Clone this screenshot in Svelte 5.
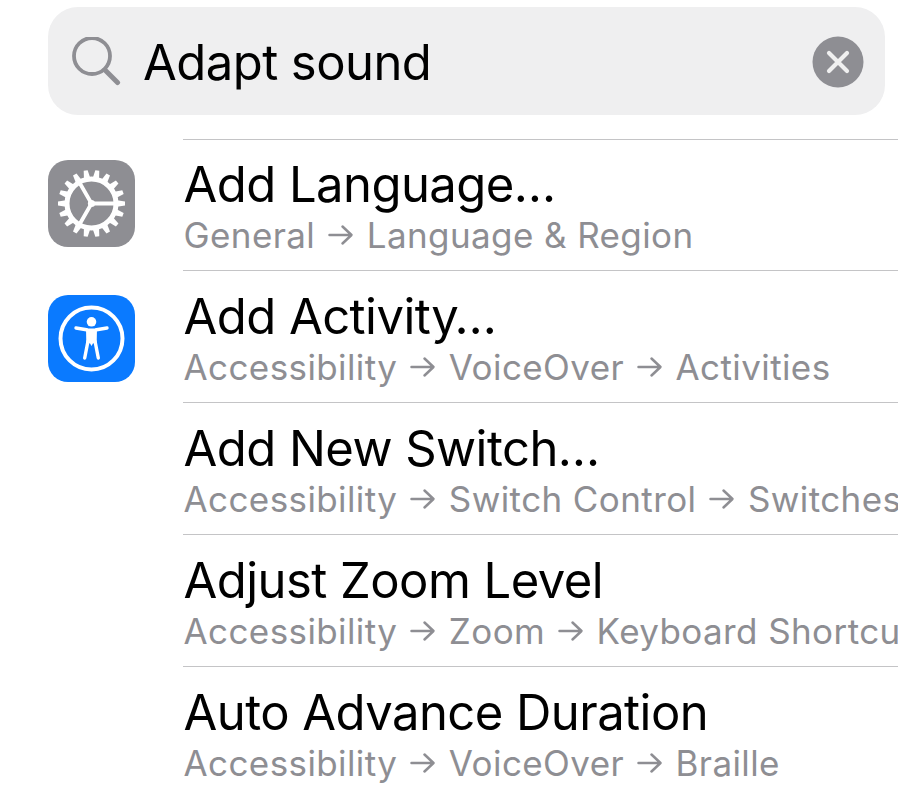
<script>
  // Settings search results list
  const results = [
    { title: 'Add Language…', path: ['General', 'Language & Region'], icon: 'gear' },
    { title: 'Add Activity…', path: ['Accessibility', 'VoiceOver', 'Activities'], icon: 'access' },
    { title: 'Add New Switch…', path: ['Accessibility', 'Switch Control', 'Switches'] },
    { title: 'Adjust Zoom Level', path: ['Accessibility', 'Zoom', 'Keyboard Shortcuts'] },
    { title: 'Auto Advance Duration', path: ['Accessibility', 'VoiceOver', 'Braille'] }
  ];

  // teeth around the cog, centred on 0,0
  const teeth = Array.from({ length: 18 }, (_, i) => i * 20);
</script>

<div class="page">
  <div class="search">
    <svg class="glass" width="50" height="50" viewBox="0 0 50 50" fill="none" aria-hidden="true">
      <circle cx="21" cy="19" r="18" stroke="#8e8e93" stroke-width="3.8" />
      <line x1="34" y1="33" x2="46.5" y2="45.5" stroke="#8e8e93" stroke-width="5" stroke-linecap="round" />
    </svg>
    <span class="query">Adapt sound</span>
    <svg class="clear" width="52" height="52" viewBox="0 0 52 52" aria-hidden="true">
      <circle cx="26" cy="26" r="25.5" fill="#8e8e93" />
      <path d="M17 17 L35 35 M35 17 L17 35" stroke="#f0f0f0" stroke-width="4.2" stroke-linecap="round" />
    </svg>
  </div>

  <ul class="list">
    {#each results as row}
      <li class="row">
        <div class="icon-col">
          {#if row.icon === 'gear'}
            <svg class="icon gear" width="87" height="87" viewBox="-43.5 -43.5 87 87" fill="none" aria-hidden="true">
              <g fill="#fff">
                {#each teeth as a}
                  <path d="M-3.4 -24 L-2 -33.5 L2 -33.5 L3.4 -24 Z" transform="rotate({a + 10})" />
                {/each}
              </g>
              <circle r="24.5" stroke="#fff" stroke-width="5" />
              <path d="M0 0 L23 0 M0 0 L-11.5 -20 M0 0 L-11.5 20" stroke="#fff" stroke-width="3.8" />
              <circle r="3.6" fill="#fff" />
            </svg>
          {:else if row.icon === 'access'}
            <svg class="icon access" width="87" height="87" viewBox="-43.5 -43.5 87 87" fill="none" aria-hidden="true">
              <circle r="31" stroke="#fff" stroke-width="4" />
              <circle cx="0" cy="-16.7" r="4.8" fill="#fff" />
              <path d="M-15.5 -10.5 L-5 -8.8 M15.5 -10.5 L5 -8.8 M-3.6 3 L-6.8 19.5 M3.6 3 L6.8 19.5" stroke="#fff" stroke-width="3.4" stroke-linecap="round" />
              <path d="M-5.5 -10 L5.5 -10 L5.2 4 L1.4 5 L0 7.5 L-1.4 5 L-5.2 4 Z" fill="#fff" />
            </svg>
          {/if}
        </div>
        <div class="text">
          <div class="title">{row.title}</div>
          <div class="crumbs">
            {#each row.path as part, i}
              {#if i > 0}
                <svg class="arrow" width="26" height="22" viewBox="0 0 26 22" fill="none" aria-hidden="true">
                  <path d="M1.5 11 H23 M14.5 2.5 L23.5 11 L14.5 19.5" stroke="#8e8e93" stroke-width="2.5" stroke-linecap="round" stroke-linejoin="round" />
                </svg>
              {/if}
              <span>{part}</span>
            {/each}
          </div>
        </div>
      </li>
    {/each}
  </ul>
</div>

<style>
  :global(body) {
    margin: 0;
    background: #fff;
    overflow: hidden;
  }

  .page {
    width: 898px;
    height: 790px;
    overflow: hidden;
    padding-top: 7px;
    box-sizing: border-box;
    font-family: Inter, "Liberation Sans", sans-serif;
  }

  .search {
    display: flex;
    align-items: center;
    box-sizing: border-box;
    width: 837px;
    height: 108px;
    margin-left: 48px;
    padding: 0 21px 0 23px;
    background: #efeff0;
    border-radius: 30px;
  }

  .glass {
    flex: none;
    margin-top: 2px;
  }

  .query {
    flex: 1;
    margin-left: 22px;
    padding-top: 2px;
    font-size: 49px;
    line-height: 1;
    color: #000;
    letter-spacing: -0.55px;
  }

  .clear {
    flex: none;
    margin-top: 1px;
  }

  .list {
    list-style: none;
    margin: 24px 0 0;
    padding: 0;
  }

  .row {
    display: flex;
    height: 132px;
  }

  .row:first-child {
    height: 131px;
  }

  .icon-col {
    flex: none;
    width: 135px;
    box-sizing: border-box;
    padding: 25px 0 0 48px;
  }

  .row:first-child .icon-col {
    padding-top: 21px;
  }

  .icon {
    display: block;
    border-radius: 20px;
  }

  .gear {
    background: #8e8e93;
  }

  .access {
    background: #0a7aff;
  }

  .text {
    flex: 1;
    min-width: 0;
    margin-left: 48px;
    padding: 19px 0 0 0.5px;
    border-top: 1.5px solid #c4c4c6;
    white-space: nowrap;
    overflow: hidden;
  }

  .row:first-child .text {
    padding-top: 18px;
  }

  .title {
    font-size: 49px;
    line-height: 54px;
    color: #000;
    letter-spacing: -0.55px;
  }

  .crumbs {
    display: flex;
    align-items: center;
    font-size: 35px;
    line-height: 44px;
    color: #8e8e93;
    letter-spacing: 0.4px;
    margin-top: 1px;
  }

  .arrow {
    flex: none;
    margin: 0 13px 0 12.5px;
  }
</style>
